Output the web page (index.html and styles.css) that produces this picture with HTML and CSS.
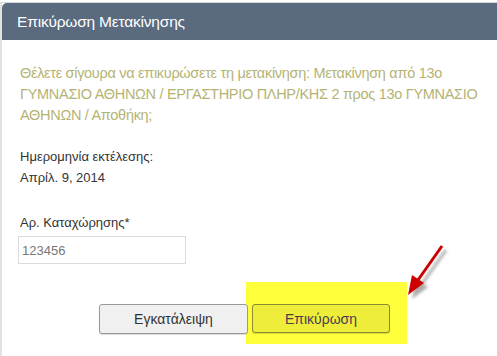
FILE: index.html
```html
<!DOCTYPE html>
<html>
<head>
<meta charset="UTF-8">
<title>Επικύρωση Μετακίνησης</title>
<link rel="stylesheet" href="styles.css">
</head>
<body>
<div class="dialog">
	<div class="dlg_title">Επικύρωση Μετακίνησης</div>
	<div class="dlg_body">
		<p class="question">Θέλετε σίγουρα να επικυρώσετε τη μετακίνηση: Μετακίνηση από 13ο ΓΥΜΝΑΣΙΟ ΑΘΗΝΩΝ / ΕΡΓΑΣΤΗΡΙΟ ΠΛΗΡ/ΚΗΣ 2 προς 13ο ΓΥΜΝΑΣΙΟ ΑΘΗΝΩΝ / Αποθήκη;</p>

		<div class="field">
			<div class="lbl">Ημερομηνία εκτέλεσης:</div>
			<div class="val">Απρίλ. 9, 2014</div>
		</div>

		<div class="field">
			<div class="lbl">Αρ. Καταχώρησης*</div>
			<input type="text" class="txt" value="123456">
		</div>

		<div class="buttons">
			<button class="btn btn_cancel">Εγκατάλειψη</button><span class="mark"><button class="btn btn_ok">Επικύρωση</button></span>
		</div>
	</div>

	<!-- βελάκι σημείωσης -->
	<svg class="arrow" width="60" height="70" viewBox="0 0 60 70">
		<defs>
			<filter id="sh" x="-30%" y="-30%" width="160%" height="160%">
				<feGaussianBlur stdDeviation="1.6"/>
			</filter>
		</defs>
		<g transform="translate(4,4)" fill="#888" stroke="#888" opacity="0.7" filter="url(#sh)">
			<line x1="44" y1="4" x2="20" y2="38" stroke-width="3"/>
			<polygon points="10,53 14,33 26,41" stroke="none"/>
		</g>
		<line x1="44" y1="4" x2="20" y2="38" stroke="#cc0000" stroke-width="3"/>
		<polygon points="10,53 14,33 26,41" fill="#cc0000"/>
	</svg>
</div>
</body>
</html>
```

FILE: styles.css
```css
body{
	margin:0; padding-top:2px;
	background-color:#ffffff;
	font-family:"Liberation Sans", Arial, sans-serif;
}
.dialog{
	position:relative;
	border-top:1px solid #d6d6d6;
	border-left:2px solid #e2e2e2;
	height:353px;
}
.dlg_title{
	background-color:#5a6b80;
	color:#ffffff; font-size:15.5px;
	letter-spacing:-0.2px;
	height:37px; line-height:37px;
	padding-left:15px;
	border-top-left-radius:5px;
}
.dlg_body{
	padding:23px 18px 0 18px;
}
.question{
	margin:0 0 20px 0;
	color:#b5b374; font-size:14.5px;
	letter-spacing:-0.3px;
	line-height:21px;
}
.field{
	margin-bottom:24px;
	color:#333333; font-size:13px;
}
.lbl{
	line-height:21px;
}
.val{
	line-height:21px;
}
.txt{
	margin:3px 0 0 -2px;
	width:168px; height:28px;
	box-sizing:border-box;
	border:1px solid #dcdcdc;
	padding:0 3px;
	font-family:"Liberation Sans", Arial, sans-serif;
	font-size:13px; color:#777777;
}
.buttons{
	margin-top:40px;
	padding-left:79px;
}
.btn{
	width:149px; height:30px;
	border:1px solid #999999; border-radius:3px;
	background-color:#f0f0f0;
	font-family:"Liberation Sans", Arial, sans-serif;
	font-size:14px; color:#333333;
	box-shadow:0 1px 1px rgba(0,0,0,0.15);
	vertical-align:top;
}
.btn_cancel{
	position:relative; z-index:1;
}
.mark{
	display:inline-block;
	margin-left:-2px;
	padding:22px 17px 11px 6px;
	background-color:#ffff3c;
	vertical-align:top;
	margin-top:-22px;
}
.btn_ok{
	width:138px; height:29px;
	background-color:#eeee3a;
	border-color:#8a8a30;
	color:#4d3a4d;
}
.arrow{
	position:absolute;
	left:396px; top:239px;
}
```
